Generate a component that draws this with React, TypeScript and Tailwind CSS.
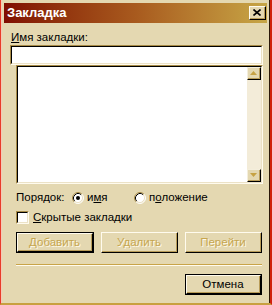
import React from "react";

function Radio({ checked }: { checked?: boolean }) {
  return (
    <svg width="12" height="12" viewBox="0 0 12 12" className="shrink-0">
      <circle cx="6" cy="6" r="5" fill="#ffffff" />
      <path d="M2.11 9.89 A5.5 5.5 0 0 1 9.89 2.11" fill="none" stroke="#a88c48" strokeWidth="1" />
      <path d="M2.82 9.18 A4.5 4.5 0 0 1 9.18 2.82" fill="none" stroke="#000000" strokeWidth="1" />
      <path d="M9.89 2.11 A5.5 5.5 0 0 1 2.11 9.89" fill="none" stroke="#ffffff" strokeWidth="1" />
      <path d="M9.18 2.82 A4.5 4.5 0 0 1 2.82 9.18" fill="none" stroke="#ece2c6" strokeWidth="1" />
      {checked && <circle cx="6" cy="6" r="2" fill="#000000" />}
    </svg>
  );
}

function ScrollBtn({ up }: { up?: boolean }) {
  return (
    <div className="h-[13px] w-[14px] bg-[#e4d8b1] border-t border-l border-t-[#f4eedc] border-l-[#f4eedc] border-b border-r border-b-black border-r-black">
      <div className="h-full w-full border-b border-r border-b-[#b89c58] border-r-[#b89c58] flex items-center justify-center">
        <svg width="7" height="4" viewBox="0 0 7 4">
          {up ? (
            <path d="M3.5 0 L7 4 L0 4 Z" fill="#c6a244" />
          ) : (
            <path d="M0 0 L7 0 L3.5 4 Z" fill="#c6a244" />
          )}
        </svg>
      </div>
    </div>
  );
}

function Btn({ label, isDefault, disabled, w }: { label: string; isDefault?: boolean; disabled?: boolean; w: string }) {
  const inner = (
    <div className="h-full w-full border-t border-l border-t-[#fffbee] border-l-[#fffbee] border-b border-r border-b-black border-r-black">
      <div className="h-full w-full border-b border-r border-b-[#b89c58] border-r-[#b89c58] flex items-center justify-center">
        <span
          className={
            disabled
              ? "text-[#c6a650] [text-shadow:1px_1px_0_#fff8e6]"
              : "text-black"
          }
        >
          {label}
        </span>
      </div>
    </div>
  );
  if (isDefault) {
    return (
      <div className={`${w} h-[21px] border border-black bg-[#e4d8b1]`}>
        {inner}
      </div>
    );
  }
  return <div className={`${w} h-[21px] bg-[#e4d8b1]`}>{inner}</div>;
}

export default function App() {
  return (
    <div className="w-[272px] h-[305px] box-border bg-[#e4d8b1] border-l border-l-[#e83c28] border-r-2 border-r-[#d0200c] border-b-2 border-b-[#c8a040] font-['Liberation_Sans',Arial,sans-serif] text-[11.5px] text-black leading-[13px]">
      <div className="h-full border-l border-l-[#f6c8b6] border-r border-r-[#2a1808] flex flex-col">
        {/* Title bar */}
        <div className="mt-[3px] mx-[2px] h-[20px] flex items-center justify-between pl-[3px] pr-[1px] bg-linear-to-r from-[#800c02] via-[#a85a1e] to-[#c6a646]">
          <span className="text-white font-bold text-[13px] leading-[16px]">Закладка</span>
          <div className="w-[17px] h-[14px] bg-[#e4d8b1] border-t border-l border-t-[#fffbee] border-l-[#fffbee] border-b border-r border-b-black border-r-black">
            <div className="h-full w-full border-b border-r border-b-[#b89c58] border-r-[#b89c58] flex items-center justify-center">
              <svg width="8" height="7" viewBox="0 0 8 7">
                <path d="M0.5 0.5 L7.5 6.5 M7.5 0.5 L0.5 6.5" stroke="#000" strokeWidth="1.6" />
              </svg>
            </div>
          </div>
        </div>

        {/* Label */}
        <div className="mt-[8px] ml-[9px] h-[13px]">
          <span className="underline underline-offset-[1px]">И</span>мя закладки:
        </div>

        {/* Input */}
        <div className="mt-[1px] ml-[8px] w-[253px] h-[20px] border-t border-l border-t-[#a88c48] border-l-[#a88c48] border-b border-r border-b-[#fffbee] border-r-[#fffbee]">
          <div className="h-full w-full bg-white border-t border-l border-t-black border-l-black border-b border-r border-b-[#ece2c6] border-r-[#ece2c6]" />
        </div>

        {/* List */}
        <div className="ml-[14px] w-[247px] h-[119px] border-t border-l border-t-[#a88c48] border-l-[#a88c48] border-b border-r border-b-[#fffbee] border-r-[#fffbee]">
          <div className="h-full w-full flex border-t border-l border-t-black border-l-black border-b border-r border-b-[#ece2c6] border-r-[#ece2c6]">
            <div className="flex-1 bg-white" />
            <div className="w-[14px] flex flex-col bg-[#f3ecd9]">
              <ScrollBtn up />
              <div className="flex-1" />
              <ScrollBtn />
            </div>
          </div>
        </div>

        {/* Order */}
        <div className="mt-[7px] ml-[14px] h-[13px] flex items-center">
          <span className="w-[56px]">Порядок:</span>
          <Radio checked />
          <span className="ml-[3px] w-[47px]">
            и<span className="underline underline-offset-[1px]">м</span>я
          </span>
          <Radio />
          <span className="ml-[3px]">
            п<span className="underline underline-offset-[1px]">о</span>ложение
          </span>
        </div>

        {/* Checkbox */}
        <div className="mt-[7px] ml-[14px] h-[13px] flex items-center">
          <div className="w-[13px] h-[13px] border-t border-l border-t-[#a88c48] border-l-[#a88c48] border-b border-r border-b-[#fffbee] border-r-[#fffbee]">
            <div className="h-full w-full bg-white border-t border-l border-t-black border-l-black border-b border-r border-b-[#ece2c6] border-r-[#ece2c6]" />
          </div>
          <span className="ml-[4px]">
            <span className="underline underline-offset-[1px]">С</span>крытые закладки
          </span>
        </div>

        {/* Buttons */}
        <div className="mt-[8px] ml-[14px] flex gap-[7px]">
          <Btn label="Добавить" isDefault disabled w="w-[78px]" />
          <Btn label="Удалить" disabled w="w-[77px]" />
          <Btn label="Перейти" disabled w="w-[77px]" />
        </div>

        {/* Separator */}
        <div className="mt-[11px] ml-[14px] w-[246px] border-t border-t-[#c8a448] border-b border-b-[#fffbee]" />

        {/* Cancel */}
        <div className="mt-[8px] ml-[183px]">
          <Btn label="Отмена" isDefault w="w-[77px]" />
        </div>
      </div>
    </div>
  );
}
